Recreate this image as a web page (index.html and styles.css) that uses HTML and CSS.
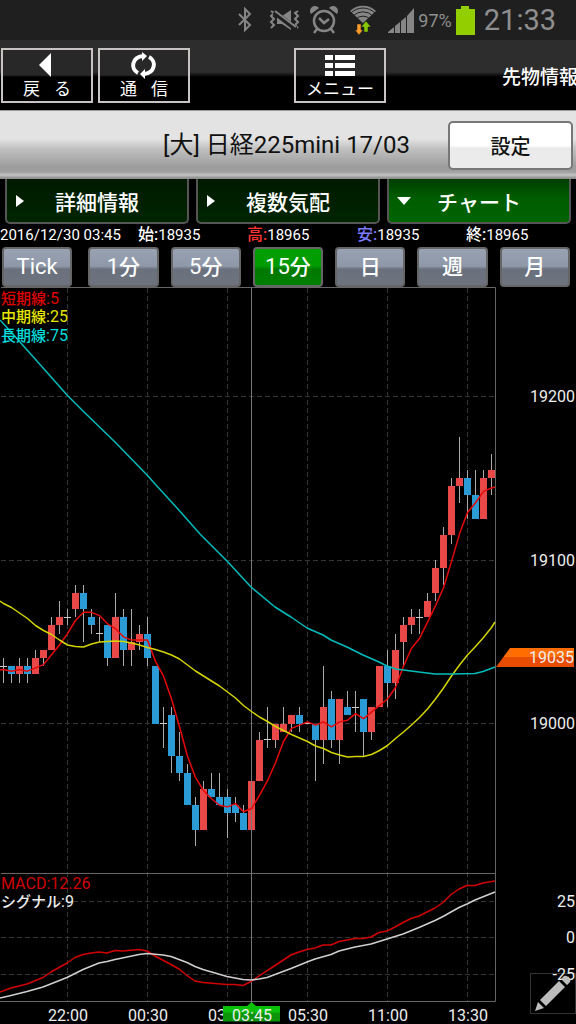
FILE: index.html
```html
<!DOCTYPE html>
<html lang="ja">
<head>
<meta charset="utf-8">
<meta name="viewport" content="width=device-width, initial-scale=1">
<title>[大] 日経225mini 17/03</title>
<link rel="stylesheet" href="styles.css">
</head>
<body>
<div class="status-bar">
  <svg class="status-icon" width="16" height="26" viewBox="0 0 16 26" aria-hidden="true"><path d="M2 7l11 11-5 5V2l5 5L2 18" fill="none" stroke="#858585" stroke-width="2"/></svg>
  <svg class="status-icon mute" width="31" height="24" viewBox="0 0 31 24" aria-hidden="true">
    <path d="M2 3l3 2-3 3 3 3-3 3 3 3-3 3M29 3l-3 2 3 3-3 3 3 3-3 3 3 3" fill="none" stroke="#858585" stroke-width="2"/>
    <path d="M8 8h5l9-6v20l-9-6H8z" fill="#858585"/>
    <path d="M5 4l22 17" stroke="#1f1f1f" stroke-width="5"/><path d="M6 3l21 16" stroke="#858585" stroke-width="2"/>
  </svg>
  <svg class="status-icon" width="28" height="28" viewBox="0 0 28 28" aria-hidden="true">
    <g fill="none" stroke="#858585" stroke-width="2.5"><circle cx="14" cy="15" r="10"/><path d="M9 12l5 5 5-4M7 23l-3 4M21 23l3 4"/></g>
    <path d="M1 8a5 5 0 0 1 8-6zM27 8a5 5 0 0 0-8-6z" fill="#858585"/>
  </svg>
  <svg class="status-icon wifi" width="26" height="30" viewBox="0 0 26 30" aria-hidden="true">
    <path d="M13 18L0 6a19 19 0 0 1 26 0z" fill="#858585"/>
    <path d="M1 8a17 17 0 0 1 24 0M3 11a14 14 0 0 1 20 0M6 14a10 10 0 0 1 14 0" fill="none" stroke="#1f1f1f" stroke-width="1"/>
    <path d="M7 19h4v6h2l-4 5-4-5h2z" fill="#ff9d28" stroke="#1f1f1f" stroke-width=".5"/>
    <path d="M14 27h4v-5h3l-5-6-5 6h3z" fill="#86c800" stroke="#1f1f1f" stroke-width=".5"/>
  </svg>
  <svg class="status-icon" width="26" height="26" viewBox="0 0 26 26" aria-hidden="true"><path d="M0 26v-1l6-5v6zM7 26v-7l5-4v11zM13 26v-12l5-4v16zM19 26V9l7-8v25z" fill="#858585"/></svg>
  <span class="battery-level">97%</span>
  <svg class="status-icon" width="19" height="29" viewBox="0 0 19 29" aria-hidden="true"><path d="M0 3h5V0h8v3h6v26H0z" fill="#93cf00"/></svg>
  <span class="clock">21:33</span>
</div>

<header class="toolbar">
  <button class="tool" type="button">
    <svg width="34" height="26" viewBox="0 0 34 26" aria-hidden="true"><path d="M9 13L21 1v24z" fill="#fff"/></svg>
    <span class="spread"><span>戻</span><span>る</span></span>
  </button>
  <button class="tool" type="button">
    <svg width="34" height="26" viewBox="0 0 34 26" aria-hidden="true">
      <path d="M11 21C3 17 5 5 16 4M22 5c8 4 6 16-5 17" fill="none" stroke="#fff" stroke-width="4"/>
      <path d="M15 0l5 4-5 5zM18 17l-5 5 5 5z" fill="#fff"/>
    </svg>
    <span class="spread"><span>通</span><span>信</span></span>
  </button>
  <button class="tool menu" type="button">
    <svg width="34" height="26" viewBox="0 0 34 26" aria-hidden="true"><path d="M2 3h8v5H2zM12 3h20v5H12zM2 11h8v5H2zM12 11h20v5H12zM2 19h8v5H2zM12 19h20v5H12z" fill="#fff"/></svg>
    <span>メニュー</span>
  </button>
  <span class="page-name">先物情報</span>
</header>

<section class="title-bar">
  <h1 class="title">[大] 日経225mini 17/03</h1>
  <button class="settings" type="button">設定</button>
</section>

<nav class="tabs">
  <button class="tab" type="button"><svg class="tab-mark" width="16" height="14" viewBox="0 0 16 14" aria-hidden="true"><path d="M0 1l8 6-8 6z" fill="#fff"/></svg><span>詳細情報</span></button>
  <button class="tab" type="button"><svg class="tab-mark" width="16" height="14" viewBox="0 0 16 14" aria-hidden="true"><path d="M0 1l8 6-8 6z" fill="#fff"/></svg><span>複数気配</span></button>
  <button class="tab active" type="button"><svg class="tab-mark" width="16" height="14" viewBox="0 0 16 14" aria-hidden="true"><path d="M-1 3h14l-7 8z" fill="#fff"/></svg><span>チャート</span></button>
</nav>

<div class="quote">
  <span>2016/12/30 03:45</span>
  <span><b>始:</b>18935</span>
  <span><b class="high">高:</b>18965</span>
  <span><b class="low">安:</b>18935</span>
  <span><b>終:</b>18965</span>
</div>

<div class="periods">
  <button class="period tick" type="button">Tick</button>
  <button class="period" type="button">1<b>分</b></button>
  <button class="period" type="button">5<b>分</b></button>
  <button class="period selected" type="button">15<b>分</b></button>
  <button class="period" type="button"><b>日</b></button>
  <button class="period" type="button"><b>週</b></button>
  <button class="period" type="button"><b>月</b></button>
</div>

<main class="chart-area">
  <svg class="chart" viewBox="0 287 576 737" role="img" aria-label="15分足チャート">
    <defs>
      <linearGradient id="price-fill" x1="0" y1="0" x2="0" y2="1"><stop offset=".5" stop-color="#ff6c00"/><stop offset=".5" stop-color="#e84c00"/></linearGradient>
      <linearGradient id="time-fill" x1="0" y1="0" x2="0" y2="1"><stop offset=".5" stop-color="#0bc00b"/><stop offset=".6" stop-color="#0b950b"/></linearGradient>
      <clipPath id="plot"><rect x="0" y="287" width="495" height="714"/></clipPath>
    </defs>
    <path class="grid" d="M67.5 288V1001M147.5 288V1001M227.5 288V1001M307.5 288V1001M387.5 288V1001M467.5 288V1001"/>
    <path class="grid" d="M1 396.5H495M1 560.5H495M1 723.5H495M1 901.5H495M1 937.5H495M1 974.5H495"/>
    <g id="candles" clip-path="url(#plot)"></g>
    <path class="frame" d="M1 287.5H495.5V1001.5H0M1 873.5H495"/>
    <path class="cursor" d="M251.5 288V1003"/>
    <g id="lines"></g>

    <g class="label">
      <text x="1" y="304" class="short"><tspan class="ja">短期線</tspan>:5</text>
      <text x="1" y="322" class="middle"><tspan class="ja">中期線</tspan>:25</text>
      <text x="1" y="341" class="long"><tspan class="ja">長期線</tspan>:75</text>
      <text x="1" y="889" class="macd">MACD:12.26</text>
      <text x="1" y="907"><tspan class="ja">シグナル</tspan>:9</text>
    </g>
    <g class="label axis-y">
      <text x="575" y="402">19200</text>
      <text x="575" y="566">19100</text>
      <text x="575" y="729">19000</text>
      <text x="575" y="907">25</text>
      <text x="575" y="943">0</text>
    </g>
    <path d="M496 667L510 648H574V667Z" fill="url(#price-fill)"/>
    <text class="label axis-y" x="574" y="663">19035</text>
    <g class="label axis-x">
      <text x="68" y="1021">22:00</text>
      <text x="148" y="1021">00:30</text>
      <text x="228" y="1021">03:00</text>
      <text x="308" y="1021">05:30</text>
      <text x="388" y="1021">11:00</text>
      <text x="468" y="1021">13:30</text>
      <path d="M223 1006H247L251.5 1002L256 1006H280V1021.5H223Z" fill="url(#time-fill)"/>
      <text x="252" y="1021">03:45</text>
    </g>
    <g>
      <rect x="530.5" y="973.5" width="45" height="40" fill="#000" stroke="#333"/>
      <text class="label axis-y" x="575" y="980">-25</text>
      <g fill="#bdbdbd"><path d="M535 1011l3-9 6 6zM540 1000l19-19 6 6-19 19zM561 979l3-3q2-1 4 1l2 2q1 2 0 3l-3 3z"/></g>
    </g>
  </svg>
</main>
<script src="chart.js"></script>
</body>
</html>
```
FILE: styles.css
```css
* { box-sizing: border-box; }

body {
  margin: 0;
  background: #000;
  color: #fff;
  font-family: Roboto, "Noto Sans CJK JP", sans-serif;
  font-size: 16px;
}

button {
  font-family: inherit;
  color: inherit;
  padding: 0;
  cursor: pointer;
}

.status-bar {
  display: flex;
  align-items: center;
  justify-content: flex-end;
  height: 40px;
  padding-right: 20px;
  background: #1f1f1f;
  color: #8f8f8f;
}

.status-icon { display: block; margin-right: 12px; }
.status-icon.mute { margin-left: 4px; margin-right: 10px; }
.battery-level { font-size: 18px; margin-left: -8px; margin-right: 4px; }
.clock { font-size: 29px; line-height: 40px; margin-left: -3px; }

.toolbar {
  display: flex;
  align-items: center;
  height: 70px;
  padding: 0 0 0 1px;
  background: linear-gradient(#2d2d2d 32px, #000 37px);
}

.tool {
  display: flex;
  flex-direction: column;
  align-items: center;
  width: 92px;
  height: 55px;
  margin-right: 5px;
  padding-top: 2px;
  border: 2px solid #c8c4c4;
  background: linear-gradient(#282828 25px, #000 27px);
  font-size: 17px;
  line-height: 22px;
}

.tool svg { flex: none; overflow: visible; }
.tool.menu { margin-left: 99px; }
.spread { display: flex; gap: 14px; }

.page-name {
  margin-left: auto;
  margin-right: -2px;
  font-size: 19px;
  font-weight: 500;
  white-space: nowrap;
}

.title-bar {
  display: flex;
  align-items: center;
  justify-content: flex-end;
  gap: 38px;
  height: 69px;
  padding-right: 3px;
  border-top: 1px solid #9b9b9b;
  background: linear-gradient(#e3e3e3 28px, #c0c0c0 38px, #9c9c9c 56px, #a0a0a0 61px, #c4c4c4 64px, #909090 67px);
  color: #111;
}

.title { margin: 0; font-size: 24px; font-weight: 400; line-height: 32px; white-space: nowrap; }

.settings {
  width: 125px;
  height: 49px;
  border: 2px solid #777;
  border-radius: 5px;
  background: linear-gradient(#fff 50%, #ebebeb 56%);
  font-size: 20px;
  font-weight: 500;
}

.tabs { display: flex; gap: 7px; height: 45px; padding: 0 5px; }

.tab {
  display: flex;
  flex: 1;
  align-items: center;
  padding: 0 48px 0 9px;
  border: 2px solid #555;
  border-top: 0;
  border-radius: 0 0 5px 5px;
  background: linear-gradient(#001a00, #002500);
  font-size: 21px;
  font-weight: 500;
  white-space: nowrap;
}

.tab span { flex: 1; margin-left: 23px; text-align: center; }
.tab.active { background: linear-gradient(#003d00, #005c00 18px, #006400); }
.tab-mark { flex: none; overflow: visible; }

.quote {
  display: grid;
  grid-template-columns: 138fr 109fr 110fr 109fr 110fr;
  font-size: 15px;
  line-height: 23px;
  white-space: nowrap;
}

.quote b { font-size: 16px; font-weight: 500; line-height: 16px; }
.high { color: #ff3535; }
.low { color: #7c7cff; }

.periods { display: flex; gap: 12px; height: 40px; padding: 0 6px 0 2px; }

.period {
  flex: 1;
  border: 2px solid #666;
  border-radius: 4px;
  background: linear-gradient(#99a2b2, #8f98a8 48%, #6a717d 56%, #6d747f);
  font-size: 22px;
  line-height: 34px;
}

.period b { font-size: 21px; font-weight: 500; }
.period.tick { margin-right: 4px; }
.period.selected { background: linear-gradient(#00a000, #009a00 48%, #007800 56%, #008000); }

.chart { display: block; width: 100%; height: auto; }
.grid { fill: none; stroke: #353535; stroke-dasharray: 5 3; }
.frame { fill: none; stroke: #666; }
.cursor { stroke: #777; }
.label { font-size: 16px; fill: #eee; }
.ja { font-size: 15px; font-weight: 500; }
.axis-y { text-anchor: end; }
.axis-x { text-anchor: middle; }
.short { fill: #e00000; }
.middle { fill: #e6e600; }
.long { fill: #00dede; }
.macd { fill: #d00000; }

.wick { stroke: #aaa; }
.flat { stroke: #ccc; }
.up { fill: #e84848; }
.down { fill: #2a9bd4; }
.line { fill: none; stroke-width: 1.5; stroke-linejoin: round; }
.line-short { stroke: #e80808; }
.line-middle { stroke: #d4d400; }
.line-long { stroke: #00bcbc; }
.line-macd { stroke: #d40000; }
.line-signal { stroke: #d0d0d0; }
```
FILE: chart.js
```js
// Each bar: open, close, high, low, as differences from 19000.
const bars = [
  [35,35,40,25],[35,30,35,25],[30,35,40,25],[35,30,40,25],[30,40,45,30],[40,45,45,35],
  [45,60,65,45],[60,65,75,55],[65,65,70,60],[70,80,85,65],[80,70,85,50],[65,60,70,55],
  [55,55,65,50],[60,40,60,35],[40,65,80,40],[65,45,70,35],[45,50,70,35],[50,55,60,45],
  [55,40,65,35],[35,0,35,0],[0,0,10,-15],[5,-20,10,-30],[-20,-30,-5,-35],[-30,-50,-25,-50],
  [-50,-65,-45,-75],[-65,-40,-35,-65],[-40,-45,-30,-45],[-45,-50,-30,-50],[-45,-55,-40,-70],
  [-50,-55,-45,-60],[-55,-65,-50,-65],[-65,-35,-35,-65],[-35,-10,-5,-35],[-10,-10,10,-15],
  [-10,0,0,-15],[-5,0,10,-5],[0,5,5,-5],[5,0,10,-5],[0,0,0,0],[0,-10,0,-35],[-10,10,35,-25],
  [15,-10,20,-15],[-10,15,15,-25],[10,5,20,5],[10,10,20,-5],[15,-5,15,-20],[-5,10,10,-10],
  [10,35,35,10],[35,25,45,10],[25,45,55,15],[50,60,65,35],[60,65,70,55],[65,65,70,55],
  [65,75,80,65],[80,95,100,75],[95,115,120,85],[115,145,150,110],[145,150,175,135],
  [150,140,155,125],[140,125,155,125],[125,150,155,125],[150,155,165,140]
];

const STEP = 8;
const xAt = i => 3.5 + i * STEP;
const yAt = v => 723.5 - v * 1.635;
const SVG = "http://www.w3.org/2000/svg";

function add(parent, name, attributes) {
  const node = document.createElementNS(SVG, name);
  for (const key in attributes) node.setAttribute(key, attributes[key]);
  parent.appendChild(node);
}

const candles = document.getElementById("candles");
bars.forEach(([open, close, high, low], i) => {
  const x = xAt(i);
  add(candles, "path", { class: "wick", d: `M${x} ${Math.round(yAt(high))}V${Math.round(yAt(low))}` });
  if (open === close) {
    const y = Math.floor(yAt(open)) + 0.5;
    add(candles, "path", { class: "flat", d: `M${x - 3.5} ${y}h7` });
    return;
  }
  const top = Math.round(yAt(Math.max(open, close)));
  const bottom = Math.round(yAt(Math.min(open, close)));
  add(candles, "rect", { class: close > open ? "up" : "down", x: x - 3.5, y: top, width: 7, height: bottom - top });
});

const lines = document.getElementById("lines");
function drawLine(name, points) {
  add(lines, "path", { class: `line line-${name}`, d: "M" + points.map(p => p.join(" ")).join("L") });
}

// Five-bar average of the closes, with the four closes before the first bar.
const closes = [35, 30, 35, 30, ...bars.map(b => b[1])];
const shortAverage = bars.map((b, i) => [xAt(i), yAt(closes.slice(i, i + 5).reduce((a, c) => a + c, 0) / 5)]);
drawLine("short", [[0, 670], ...shortAverage, [495, 487]]);

const middleY = [603.5,607.5,613,618.5,625.5,630.5,634.5,640,645,646.5,647,644,642,641.5,641,641.5,643,645,
  647.5,649.5,652,655,659,665,671,676,681,686,692,698,705.5,711.5,717,721.5,726.5,730.5,734.5,738,741.5,746,
  748.5,752.5,755,757,756.5,756.5,754.5,750.5,745.5,738.5,732,725,717.5,709,699,688,676,665,655,646.5,637.5,627.5];
drawLine("middle", [[0, 601], ...middleY.map((y, i) => [xAt(i), y]), [495, 622]]);

drawLine("long", [[0,320],[20,342],[44,369],[67,395],[84,412],[115,442],[147,475],[156,485],[177,508],[200,534],
  [227,561],[251,587],[275,607],[291,617],[307,628],[323,635],[331,640],[347,647],[363,655],[379,662],[387,666],
  [396,669],[411,671],[435,674],[451,674],[475,673.5],[483,671.5],[495,667]]);

drawLine("macd", [[0,992],[11,988],[27,984],[43,977.5],[51,972],[67,963],[75,957.5],[83,954.5],[91,953],[99,952],
  [107,953],[115,950.5],[123,951],[139,949.5],[147,951],[155,956],[171,964.5],[179,969],[187,975.5],[195,981],
  [203,982.5],[227,984.5],[235,984.5],[243,985.5],[251,981.5],[259,976],[275,965.5],[291,955],[299,952],[307,949.5],
  [315,948],[323,945],[331,945],[339,941.5],[355,938.5],[363,938.5],[371,937],[379,932.5],[387,931],[395,927],
  [403,922.5],[411,918.5],[419,916],[427,912],[435,908],[443,902.5],[451,894.5],[459,889],[467,885.5],[475,885.5],
  [483,883],[495,881]]);

drawLine("signal", [[0,998],[11,995.5],[19,993.5],[27,991.5],[43,987],[67,977.5],[83,969.5],[99,963],[107,961.5],
  [115,959.5],[139,954.5],[147,953.5],[163,955],[171,956.5],[179,959.5],[187,962.5],[195,966.5],[203,969.5],
  [227,976.5],[243,979.5],[251,980],[259,979],[267,977.5],[275,974.5],[291,968.5],[307,962],[315,959],[331,954.5],
  [339,951],[355,947],[371,944],[387,939],[403,934],[419,927.5],[435,920.5],[443,916.5],[459,907.5],[467,904],
  [475,900],[495,892]]);
```
